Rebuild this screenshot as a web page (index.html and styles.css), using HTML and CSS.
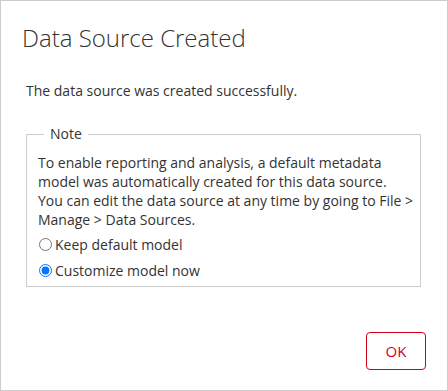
FILE: index.html
```html
<!DOCTYPE html>
<html lang="en">
<head>
    <meta charset="UTF-8">
    <title>Data Source Created</title>
    <link rel="stylesheet" href="styles.css">
</head>
<body>
    <div class="dialog">
        <h2 class="title">Data Source Created</h2>
        <p class="message">The data source was created successfully.</p>
        <fieldset class="note">
            <legend>Note</legend>
            <p>To enable reporting and analysis, a default metadata model was automatically created for this data source.<br>You can edit the data source at any time by going to File &gt; Manage &gt; Data Sources.</p>
            <label class="option"><input type="radio" name="model"> Keep default model</label>
            <label class="option"><input type="radio" name="model" checked> Customize model now</label>
        </fieldset>
        <div class="actions">
            <button class="btn">OK</button>
        </div>
    </div>
</body>
</html>
```

FILE: styles.css
```css
html, body { margin: 0; height: 100%; }
body { font-family: "Open Sans", "Liberation Sans", sans-serif; color: #333; font-size: 14px; }
.dialog {
    box-sizing: border-box;
    width: 448px;
    height: 391px;
    border: 1px solid #ccc;
    background: #fff;
    padding: 0 21px 0 25px;
    display: flex;
    flex-direction: column;
}
.title {
    margin: 20px 0 0 -4px;
    font-size: 24px;
    font-weight: 300;
    line-height: 33px;
    color: #333;
}
.message { margin: 27px 0 0 0; line-height: 19px; }
.note {
    margin: 25px 5px 0 0;
    padding: 10px 4px 3px 11px;
    border: 1px solid #ccc;
}
.note legend { padding: 0 6px; margin-left: 6px; line-height: 18px; }
.note p { margin: 0 0 2px 0; line-height: 19px; }
.option { display: flex; align-items: center; height: 26px; }
.option input { margin: 0 3px 0 1px; width: 13px; height: 13px; }
.actions { display: flex; justify-content: flex-end; margin-top: 45px; }
.btn {
    width: 60px;
    height: 38px;
    border: 1px solid #d0021b;
    border-radius: 4px;
    background: #fff;
    color: #d0021b;
    font-family: inherit;
    font-size: 15px;
    cursor: pointer;
}
```
